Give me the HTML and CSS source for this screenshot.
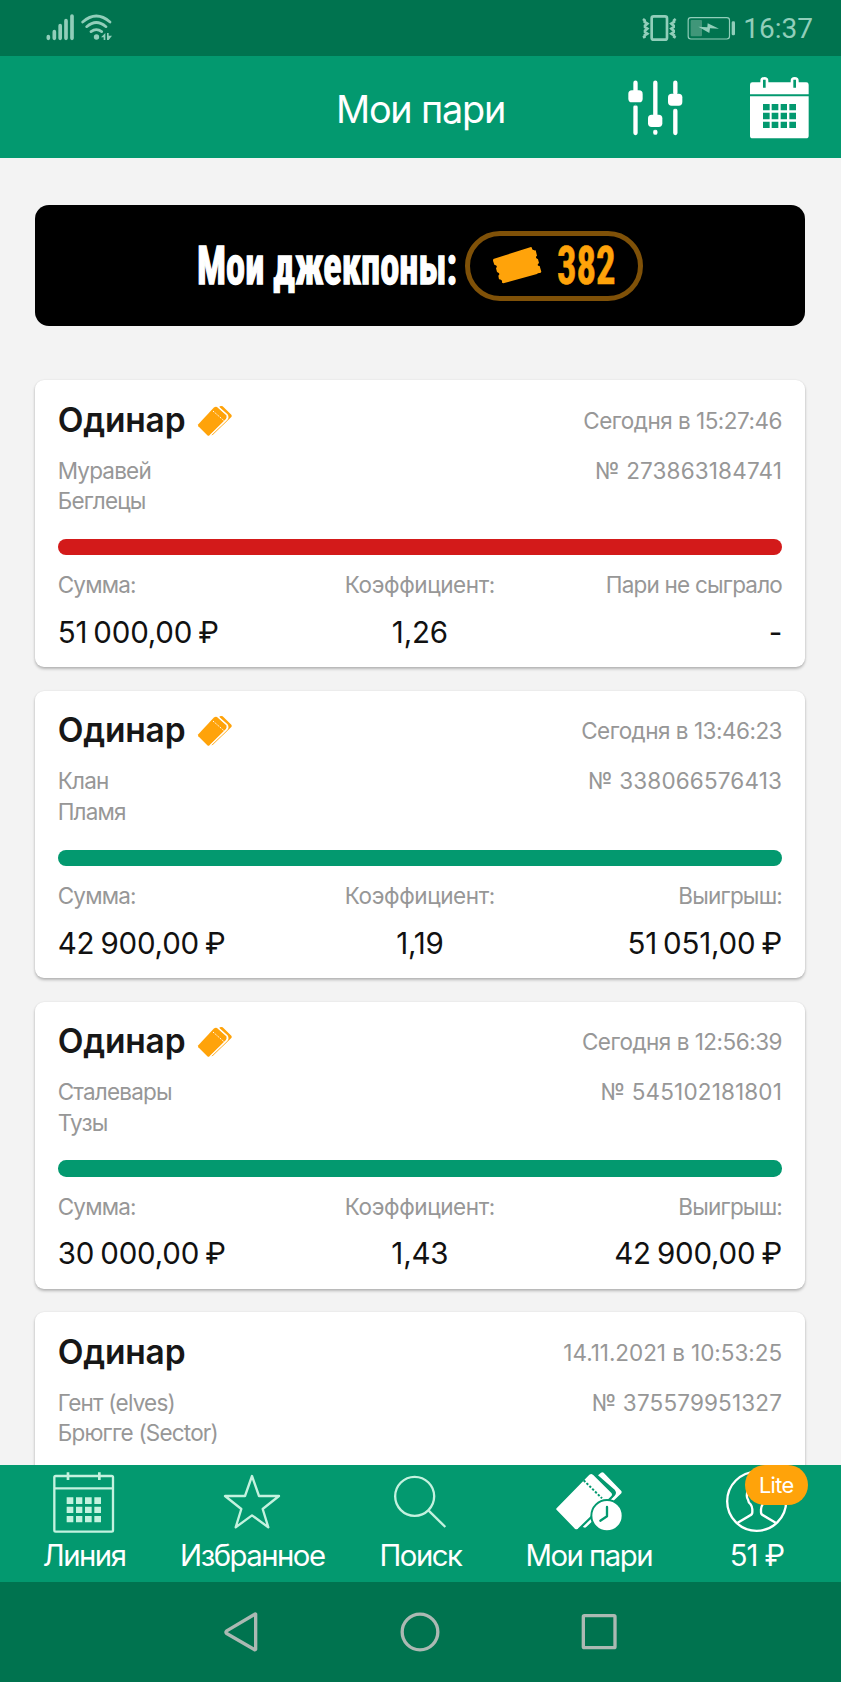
FILE: index.html
```html
<!DOCTYPE html>
<html lang="ru">
<head>
<meta charset="utf-8">
<title>Мои пари</title>
<link rel="stylesheet" href="styles.css">
</head>
<body>
<div class="screen">
  <div class="status">
    <svg class="signal" viewBox="135 36 210 90">
      <g fill="none" stroke="#91ceba" stroke-linecap="round" stroke-width="11">
        <path d="M145 110v5M163 95v20M180.500 77v38M198 62v53M216 48v67"/>
        <path stroke-width="8" d="M248 66q41-36 82 0M260 80q29-25 58 0M273 95q16-12 32 0"/>
      </g>
      <circle cx="289.500" cy="111" r="8" fill="#91ceba"/>
      <path fill="#91ceba" d="M316 99v21h-5v-8h-8zM321 99h5v8h10l-10 13h-5z"/>
    </svg>
    <div class="status-right">
      <svg class="power" viewBox="240 36 300 90">
        <g fill="none" stroke="#91ceba">
          <rect x="275" y="49" width="46" height="70" rx="6" stroke-width="8"/>
          <path stroke-width="8" d="M249 57l5 4v5l8 5-7 6v4l7 5-7 6v4l7 5-8 5v4l-5 3M347 57l-5 4v5l-8 5 7 6v4l-7 5 7 6v4l-7 5 8 5v4l5 3"/>
          <rect x="384.500" y="53" width="124" height="64" rx="8" stroke-width="3.500"/>
        </g>
        <rect x="392" y="60" width="34" height="49" rx="3" fill="#409679"/>
        <rect x="515" y="64" width="10" height="42" rx="4" fill="#91ceba"/>
        <path fill="#91ceba" d="M415 80l27 2 1-12 34 16-27-1-2 14z"/>
      </svg>
      <span class="time">16:37</span>
    </div>
  </div>

  <header class="header">
    <h1 class="title">Мои пари</h1>
    <div class="actions">
      <svg class="filters" viewBox="200 230 174 192">
        <path fill="none" stroke="#fff" stroke-width="13" stroke-linecap="round" d="M225.500 250v26M225.500 323v78M285 250v100M285 397v3M345 250v30M345 334v67"/>
        <g fill="#fff"><rect x="204" y="273" width="43" height="36" rx="11"/><rect x="263" y="346" width="43" height="37" rx="11"/><rect x="323" y="283" width="43" height="36" rx="11"/></g>
        <path stroke="#03996f" stroke-width="2" d="M219 318h13M279 391h13M338 328h13"/>
      </svg>
      <svg class="calendar" viewBox="565 230 183 192">
        <path fill="#fff" d="M575 249h24v-5q0-11 12-11t12 11v5h67v-5q0-11 12-11t12 11v5h23q7 0 7 7v29H568v-29q0-7 7-7zM568 291h176v118q0 8-8 8H576q-8 0-8-8z"/>
        <path stroke="#03996f" stroke-width="8" d="M611 241v24M702 241v24"/>
        <path fill="#03996f" d="M607 314h20v19h-20zM633 314h20v19h-20zM660 314h19v19h-19zM686 314h20v19h-20zM607 340h20v20h-20zM633 340h20v20h-20zM660 340h19v20h-19zM686 340h20v20h-20zM607 367h20v19h-20zM633 367h20v19h-20zM660 367h19v19h-19zM686 367h20v19h-20z"/>
      </svg>
    </div>
  </header>

  <main class="content">
    <section class="banner">
      <div class="banner-label"><span class="condensed">Мои джекпоны:</span></div>
      <div class="pill">
        <svg class="coupon" viewBox="937 140 150 116"><path fill="#ffa30a" d="M941 179l113-36 3 2q-1 9 11 8l4 16q-8 6 3 11l3 11q-9 8 2 9l5 17-3 4q-8-1-10 3l-101 28-4-2q2-9-9-10l-2-11q8-7-4-11l-3-11q7-8-5-11l-4-12z"/></svg>
        <div class="pill-count"><span class="condensed">382</span></div>
      </div>
    </section>

    <article class="card">
      <div class="row head"><h2 class="kind">Одинар <svg class="tickets" viewBox="534 105 108 96"><use href="#tickets"/></svg></h2><span class="muted date">Сегодня в 15:27:46</span></div>
      <div class="row teams"><div class="muted">Муравей<br>Беглецы</div><span class="muted number">№ 273863184741</span></div>
      <div class="bar lost"></div>
      <div class="labels muted"><span>Сумма:</span><span class="odds">Коэффициент:</span><span>Пари не сыграло</span></div>
      <div class="values"><span>51 000,00 ₽</span><span>1,26</span><span class="dash">-</span></div>
    </article>

    <article class="card">
      <div class="row head"><h2 class="kind">Одинар <svg class="tickets" viewBox="534 105 108 96"><use href="#tickets"/></svg></h2><span class="muted date">Сегодня в 13:46:23</span></div>
      <div class="row teams"><div class="muted">Клан<br>Пламя</div><span class="muted number">№ 338066576413</span></div>
      <div class="bar"></div>
      <div class="labels muted"><span>Сумма:</span><span class="odds">Коэффициент:</span><span>Выигрыш:</span></div>
      <div class="values"><span>42 900,00 ₽</span><span>1,19</span><span>51 051,00 ₽</span></div>
    </article>

    <article class="card">
      <div class="row head"><h2 class="kind">Одинар <svg class="tickets" viewBox="534 105 108 96"><use href="#tickets"/></svg></h2><span class="muted date">Сегодня в 12:56:39</span></div>
      <div class="row teams"><div class="muted">Сталевары<br>Тузы</div><span class="muted number">№ 545102181801</span></div>
      <div class="bar"></div>
      <div class="labels muted"><span>Сумма:</span><span class="odds">Коэффициент:</span><span>Выигрыш:</span></div>
      <div class="values"><span>30 000,00 ₽</span><span>1,43</span><span>42 900,00 ₽</span></div>
    </article>

    <article class="card">
      <div class="row head"><h2 class="kind">Одинар</h2><span class="muted date full">14.11.2021 в 10:53:25</span></div>
      <div class="row teams"><div class="muted">Гент (elves)<br>Брюгге (Sector)</div><span class="muted number">№ 375579951327</span></div>
    </article>
  </main>

  <nav class="tabs">
    <div class="tab">
      <svg viewBox="126 45 252 225">
        <g fill="none" stroke="#c4f2df" stroke-width="7"><rect x="163" y="78" width="176" height="167" rx="4"/><path d="M164 115h176"/><path stroke-width="8" d="M204 67v23M298 67v23"/></g>
        <path fill="#c4f2df" d="M200 142h20v20h-20zM228 142h19v20h-19zM255 142h20v20h-20zM283 142h20v20h-20zM200 170h20v19h-20zM228 170h19v19h-19zM255 170h20v19h-20zM283 170h20v19h-20zM200 198h20v19h-20zM228 198h19v19h-19zM255 198h20v19h-20zM283 198h20v19h-20z"/>
      </svg>
      <span>Линия</span>
    </div>
    <div class="tab">
      <svg viewBox="630 45 252 225"><path fill="none" stroke="#c4f2df" stroke-width="7" stroke-linejoin="round" d="M756 78l21 60h60l-49 39 17 55-49-36-49 36 17-55-49-39h60z"/></svg>
      <span>Избранное</span>
    </div>
    <div class="tab">
      <svg viewBox="115 45 252 225"><g fill="none" stroke="#c4f2df" stroke-width="7"><circle cx="225" cy="139" r="58.500"/><path d="M267 182l50 49"/></g></svg>
      <span>Поиск</span>
    </div>
    <div class="tab">
      <svg viewBox="620 45 252 225">
        <path fill="#fff" d="M773 76l9-8q4-2 8 0l53 55q2 3 0 7l-106 102q-3 2-7 0l-3-1 96-94q8-8 0-18z"/>
        <path fill="#fff" stroke="#03996f" stroke-width="5" d="M646 180q-2-4 1-7l99-101q7-5 13 0l56 55q5 7 0 13l-101 98q-6 5-12 0z"/>
        <path fill="none" stroke="#03996f" stroke-width="6" stroke-dasharray="7 5" d="M730 91l55 54"/>
        <circle cx="800" cy="197" r="47" fill="#fff" stroke="#03996f" stroke-width="6"/>
        <path fill="none" stroke="#03996f" stroke-width="7" stroke-linecap="round" stroke-linejoin="round" d="M800 171v28l-20 13"/>
      </svg>
      <span>Мои пари</span>
    </div>
    <div class="tab">
      <svg viewBox="165 45 252 225"><g fill="none" stroke="#fff" stroke-width="7"><circle cx="290" cy="154" r="88.500"/><path d="M264 120q-7 20 0 29 1 9 8 14 5 7 5 15v9q0 7-8 10l-36 21M316 120q7 20 0 29-1 9-8 14-5 7-5 15v9q0 7 8 10l36 21"/></g></svg>
      <span class="balance">51 ₽</span>
      <span class="badge">Lite</span>
    </div>
  </nav>

  <div class="system">
    <svg viewBox="670 486 100 120"><path d="M764 492.500v105q-1 3-4 1l-83-48q-4-4 0-8l83-49q3-2 4-1z"/></svg>
    <svg viewBox="181 486 120 120"><circle cx="241" cy="546" r="53.500"/></svg>
    <svg viewBox="715 486 120 120"><rect x="728" y="497" width="95" height="96" rx="3"/></svg>
  </div>
</div>

<svg class="defs" width="0" height="0">
  <g id="tickets">
    <path fill="#ffa30a" d="M538 169q-2-3 0-6l46-50q7-5 13 0l24 22q4 6 0 12l-48 49q-4 3-8 0z"/>
    <path fill="#ffa30a" d="M600 111l5-3q3-1 6 1l26 25q3 4 0 7l-56 54-6 1 46-44q7-9 1-16z"/>
    <path fill="none" stroke="#fff" stroke-width="3" stroke-dasharray="4 3" d="M582 123l34 30"/>
    <path fill="none" stroke="#fff" stroke-width="4" d="M597 110l27 24q5 8 0 14l-52 50"/>
  </g>
</svg>
</body>
</html>
```
FILE: styles.css
```css
* { box-sizing: border-box; }
body { margin: 0; font-family: Inter, "Noto Sans", sans-serif; background: #f3f3f3; }
svg { display: block; flex: none; }
.defs { position: absolute; }
.screen { width: 841px; height: 1682px; display: flex; flex-direction: column; overflow: hidden; }

.status { flex: none; height: 55.5px; background: #00734f; display: flex; justify-content: space-between; align-items: flex-start; padding: 12px 28px 0 45px; }
.signal { width: 70px; height: 30px; }
.status-right { display: flex; gap: 3px; }
.power { width: 100px; height: 30px; }
.time { font: 400 28px/34px Roboto, sans-serif; color: #91ceba; }

.header { flex: none; height: 102.500px; background: #03996f; display: grid; grid-template-columns: 1fr 171px 1fr; align-items: center; }
.title { grid-column: 2; margin: 0 0 -4px; font-size: 37.8px; font-weight: 400; letter-spacing: -1.2px; line-height: 46px; color: #fff; white-space: nowrap; text-align: center; }
.actions { display: flex; justify-content: flex-end; gap: 63.7px; padding: 2px 31.4px 0 0; }
.filters { width: 58px; height: 64px; }
.calendar { width: 61px; height: 64px; }

.content { flex: 1; min-height: 0; overflow: hidden; padding: 47px 35.700px 0 34.7px; }
.banner { height: 121px; margin-bottom: 54.300px; border-radius: 14px; background: #000; display: flex; align-items: center; padding-left: 162px; }
.condensed { display: block; transform-origin: 0 50%; font-family: "Roboto Condensed", Roboto, sans-serif; font-weight: 700; font-size: 53px; line-height: 60px; white-space: nowrap; }
.banner-label { width: 268.500px; color: #fff; }
.banner-label .condensed { transform: scaleX(.724); -webkit-text-stroke: 1.4px #fff; }
.pill { width: 178px; height: 70px; border: 5px solid #7f5108; border-radius: 35px; display: flex; align-items: center; padding-left: 22px; gap: 14.500px; }
.coupon { width: 50px; height: 38.700px; }
.pill-count { width: 60px; color: #ffa30a; }
.pill-count .condensed { transform: scaleX(.73); -webkit-text-stroke: .6px #ffa30a; }

.card { height: 287px; margin-bottom: 23.700px; border-radius: 9px; background: #fff; box-shadow: 0 2px 3px rgba(0,0,0,.25), 0 0 2px rgba(0,0,0,.08); padding: 19.300px 23.300px 0 23px; }
.row { display: flex; justify-content: space-between; }
.head { height: 40px; }
.kind { margin: 0; display: flex; align-items: center; gap: 12px; font-size: 33.5px; font-weight: 600; line-height: 40px; letter-spacing: -.2px; color: #171717; }
.tickets { width: 36px; height: 32px; margin-top: 2px; }
.muted { font-size: 22.5px; line-height: 30.600px; letter-spacing: -.8px; color: #979797; }
.date { line-height: 42px; letter-spacing: -.5px; }
.full { letter-spacing: -.05px; }
.number { letter-spacing: .15px; }
.teams { height: 61.200px; margin-top: 16px; }
.bar { height: 16.400px; margin-top: 22.300px; border-radius: 8.200px; background: #03996f; }
.lost { background: #d31a1a; }
.labels, .values { display: grid; grid-template-columns: 1fr auto 1fr; }
.labels > :last-child, .values > :last-child { text-align: right; }
.labels { margin-top: 14.800px; }
.odds { letter-spacing: -.4px; }
.values { margin-top: 12px; font-size: 29.500px; line-height: 38px; letter-spacing: -.2px; word-spacing: -2px; color: #111; }

.tabs { flex: none; height: 116.700px; background: #03996f; display: grid; grid-template-columns: repeat(5, 1fr); }
.tab { position: relative; display: flex; flex-direction: column; align-items: center; color: #fff; font-size: 29.300px; line-height: 34px; letter-spacing: -1.500px; white-space: nowrap; }
.tab svg { width: 84px; height: 75px; margin-bottom: -1px; }
.tab .balance { letter-spacing: -1px; }
.badge { position: absolute; left: 72px; top: 0; width: 63px; height: 40px; border-radius: 20px; background: #ffa30a; font-size: 21.800px; line-height: 41px; letter-spacing: -.6px; text-align: center; }

.system { flex: none; height: 100.300px; background: #00734f; display: flex; justify-content: center; align-items: center; gap: 139px; padding-right: 2px; }
.system svg { width: 40px; height: 40px; fill: none; stroke: #abb9b3; stroke-width: 10px; stroke-linejoin: round; }
```
